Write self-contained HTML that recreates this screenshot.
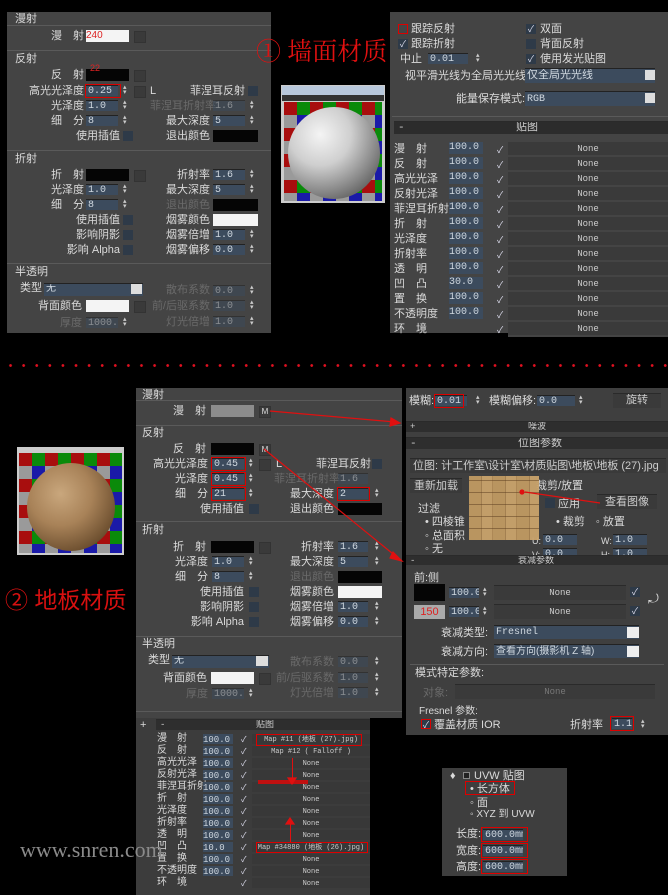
<!DOCTYPE html><html><head><meta charset="utf-8"><style>
*{margin:0;padding:0;box-sizing:border-box}
body{width:668px;height:895px;background:#000;position:relative;overflow:hidden;font-family:"Liberation Sans","Noto Sans CJK SC",sans-serif}
.p{position:absolute;background:#444}
.t{position:absolute;color:#dadada;font-size:11px;line-height:12px;white-space:nowrap}
.r{text-align:right}
.g{color:#6a6a6a}
.f{position:absolute;background:#3c4b5d;color:#d0d8e0;font-size:10px;height:11px;line-height:11px;padding-left:2px;font-family:"Liberation Mono",monospace;border-top:1px solid #222;white-space:nowrap;overflow:hidden}
.s{position:absolute;width:5px;height:10px;color:#ccc;font-size:7px;line-height:5px}
.s:before{content:"▴";display:block}.s:after{content:"▾";display:block}
.b{position:absolute;background:#3a3a3a;height:12px;color:#ccc;font-size:9px;line-height:12px;text-align:center;font-family:"Liberation Mono",monospace;border-top:1px solid #2a2a2a;white-space:nowrap;overflow:hidden}
.c{position:absolute;width:10px;height:10px;background:#2e3a48;color:#dde;font-size:9px;line-height:10px;text-align:center}
.e{position:absolute;width:10px;height:10px;background:#2e3a48}
.q{position:absolute;width:12px;height:12px;background:#3a3a3a;border:1px solid #333}
.h{position:absolute;height:1px;background:#5a5a5a}
.rb{position:absolute;border:1px solid #d00}
.sw{position:absolute;height:12px}
.chk{position:absolute;background:conic-gradient(#0a8a0a 0 25%,#1a1aa8 0 50%,#9a9a9a 0 75%,#a80e0e 0) 0 0/26px 26px}
</style></head><body>

<!-- Panel A -->
<div class="p" style="left:7px;top:12px;width:264px;height:321px"></div>
<div class="t" style="left:15px;top:13px">漫射</div><div class="h" style="left:7px;top:25px;width:264px"></div>
<div class="t r" style="left:30px;top:30px;width:54px">漫　射</div>
<div class="sw" style="left:86px;top:30px;width:43px;background:#f4f4f4;color:#d22;font-size:10px;line-height:11px">240</div><div class="q" style="left:134px;top:31px"></div>
<div class="h" style="left:7px;top:50px;width:264px"></div>
<div class="t" style="left:15px;top:53px">反射</div>
<div class="t r" style="left:30px;top:69px;width:54px">反　射</div>
<div class="sw" style="left:86px;top:69px;width:43px;background:#050505"></div><div class="t" style="left:90px;top:62px;color:#d22;font-size:9px">22</div><div class="q" style="left:134px;top:70px"></div>
<div class="t r" style="left:10px;top:85px;width:74px">高光光泽度</div><div class="f" style="left:86px;top:85px;width:32px">0.25</div><div class="rb" style="left:85px;top:84px;width:36px;height:14px"></div><div class="s" style="left:123px;top:85px"></div><div class="q" style="left:134px;top:86px"></div><div class="t" style="left:150px;top:85px">L</div>
<div class="t" style="left:190px;top:85px">菲涅耳反射</div><div class="e" style="left:248px;top:86px"></div>
<div class="t r" style="left:10px;top:100px;width:74px">光泽度</div><div class="f" style="left:86px;top:100px;width:32px">1.0</div><div class="s" style="left:123px;top:100px"></div>
<div class="t g" style="left:150px;top:100px">菲涅耳折射率</div><div class="f" style="left:213px;top:100px;width:32px;opacity:.5">1.6</div><div class="s" style="left:250px;top:100px"></div>
<div class="t r" style="left:10px;top:115px;width:74px">细　分</div><div class="f" style="left:86px;top:115px;width:32px">8</div><div class="s" style="left:123px;top:115px"></div>
<div class="t r" style="left:150px;top:115px;width:60px">最大深度</div><div class="f" style="left:213px;top:115px;width:32px">5</div><div class="s" style="left:250px;top:115px"></div>
<div class="t r" style="left:30px;top:130px;width:90px">使用插值</div><div class="e" style="left:123px;top:131px"></div>
<div class="t r" style="left:150px;top:130px;width:60px">退出颜色</div><div class="sw" style="left:213px;top:130px;width:45px;background:#050505"></div>
<div class="h" style="left:7px;top:150px;width:264px"></div>
<div class="t" style="left:15px;top:153px">折射</div>
<div class="t r" style="left:30px;top:169px;width:54px">折　射</div><div class="sw" style="left:86px;top:169px;width:43px;background:#050505"></div><div class="q" style="left:134px;top:170px"></div>
<div class="t r" style="left:150px;top:169px;width:60px">折射率</div><div class="f" style="left:213px;top:169px;width:32px">1.6</div><div class="s" style="left:250px;top:169px"></div>
<div class="t r" style="left:10px;top:184px;width:74px">光泽度</div><div class="f" style="left:86px;top:184px;width:32px">1.0</div><div class="s" style="left:123px;top:184px"></div>
<div class="t r" style="left:150px;top:184px;width:60px">最大深度</div><div class="f" style="left:213px;top:184px;width:32px">5</div><div class="s" style="left:250px;top:184px"></div>
<div class="t r" style="left:10px;top:199px;width:74px">细　分</div><div class="f" style="left:86px;top:199px;width:32px">8</div><div class="s" style="left:123px;top:199px"></div>
<div class="t r g" style="left:150px;top:199px;width:60px">退出颜色</div><div class="sw" style="left:213px;top:199px;width:45px;background:#050505"></div>
<div class="t r" style="left:30px;top:214px;width:90px">使用插值</div><div class="e" style="left:123px;top:215px"></div>
<div class="t r" style="left:150px;top:214px;width:60px">烟雾颜色</div><div class="sw" style="left:213px;top:214px;width:45px;background:#f4f4f4"></div>
<div class="t r" style="left:30px;top:229px;width:90px">影响阴影</div><div class="e" style="left:123px;top:230px"></div>
<div class="t r" style="left:150px;top:229px;width:60px">烟雾倍增</div><div class="f" style="left:213px;top:229px;width:32px">1.0</div><div class="s" style="left:250px;top:229px"></div>
<div class="t r" style="left:30px;top:244px;width:90px">影响 Alpha</div><div class="e" style="left:123px;top:245px"></div>
<div class="t r" style="left:150px;top:244px;width:60px">烟雾偏移</div><div class="f" style="left:213px;top:244px;width:32px">0.0</div><div class="s" style="left:250px;top:244px"></div>
<div class="h" style="left:7px;top:263px;width:264px"></div>
<div class="t" style="left:15px;top:266px">半透明</div>
<div class="t" style="left:20px;top:282px">类型</div><div class="f" style="left:44px;top:283px;width:99px;height:13px">无</div><div class="sw" style="left:131px;top:284px;width:11px;height:10px;background:#ddd"></div>
<div class="t r g" style="left:150px;top:284px;width:60px">散布系数</div><div class="f" style="left:213px;top:285px;width:32px;opacity:.5">0.0</div><div class="s" style="left:250px;top:285px"></div>
<div class="t r" style="left:10px;top:300px;width:72px">背面颜色</div><div class="sw" style="left:86px;top:300px;width:43px;background:#f4f4f4"></div><div class="q" style="left:134px;top:301px"></div>
<div class="t r g" style="left:140px;top:300px;width:70px">前/后驱系数</div><div class="f" style="left:213px;top:300px;width:32px;opacity:.5">1.0</div><div class="s" style="left:250px;top:300px"></div>
<div class="t r g" style="left:30px;top:317px;width:52px">厚度</div><div class="f" style="left:86px;top:317px;width:32px;opacity:.5">1000.0</div><div class="s" style="left:123px;top:317px"></div>
<div class="t r g" style="left:150px;top:316px;width:60px">灯光倍增</div><div class="f" style="left:213px;top:316px;width:32px;opacity:.5">1.0</div><div class="s" style="left:250px;top:316px"></div>

<!-- Title 1 + preview -->
<div class="t" style="left:256px;top:38px;color:#e01010;font-size:25px;line-height:30px;font-family:'Liberation Serif','Noto Serif CJK SC',serif">① 墙面材质</div>
<div style="position:absolute;left:281px;top:85px;width:104px;height:118px;background:#ccc">
<div style="position:absolute;left:1px;top:1px;width:102px;height:9px;background:#b8c8dc"></div>
<div style="position:absolute;left:1px;top:10px;width:102px;height:6px;background:#333"></div>
<div class="chk" style="left:3px;top:17px;width:98px;height:99px"></div>
<div style="position:absolute;left:7px;top:22px;width:92px;height:92px;border-radius:50%;background:radial-gradient(circle at 35% 30%,#f4f4f4 0,#cfcfcf 35%,#888 65%,#333 100%)"></div>
</div>

<!-- Panel B -->
<div class="p" style="left:390px;top:12px;width:278px;height:321px"></div>
<div class="rb" style="left:398px;top:24px;width:10px;height:10px"></div><div class="t" style="left:411px;top:23px">跟踪反射</div>
<div class="c" style="left:398px;top:39px">✓</div><div class="t" style="left:411px;top:38px">跟踪折射</div>
<div class="t" style="left:400px;top:53px">中止</div><div class="f" style="left:428px;top:53px;width:40px">0.01</div><div class="s" style="left:476px;top:53px"></div>
<div class="c" style="left:526px;top:24px">✓</div><div class="t" style="left:540px;top:23px">双面</div>
<div class="e" style="left:526px;top:39px"></div><div class="t" style="left:540px;top:38px">背面反射</div>
<div class="c" style="left:526px;top:54px">✓</div><div class="t" style="left:540px;top:53px">使用发光贴图</div>
<div class="t" style="left:405px;top:70px">视平滑光线为全局光光线:</div><div class="f" style="left:525px;top:68px;width:130px;height:15px;line-height:15px;font-size:11px">仅全局光光线</div><div class="sw" style="left:645px;top:70px;width:10px;height:10px;background:#ddd"></div>
<div class="t" style="left:456px;top:93px">能量保存模式:</div><div class="f" style="left:525px;top:91px;width:130px;height:15px;line-height:15px">RGB</div><div class="sw" style="left:645px;top:93px;width:10px;height:10px;background:#ddd"></div>
<div class="h" style="left:392px;top:116px;width:276px"></div>
<div class="b" style="left:394px;top:121px;width:274px;height:13px;background:#2c2c2c;font-size:11px;text-align:left;padding-left:4px">-<span style="position:absolute;left:122px">贴图</span></div>
<div class="t" style="left:394px;top:142px;line-height:15px">漫　射<br>反　射<br>高光光泽<br>反射光泽<br>菲涅耳折射<br>折　射<br>光泽度<br>折射率<br>透　明<br>凹　凸<br>置　换<br>不透明度<br>环　境</div>
<div style="position:absolute;left:449px;top:142px;width:34px;font:10px/12px 'Liberation Mono',monospace;color:#d0d8e0">
<div style="background:#3c4b5d;height:12px;margin-bottom:3px">100.0</div><div style="background:#3c4b5d;height:12px;margin-bottom:3px">100.0</div><div style="background:#3c4b5d;height:12px;margin-bottom:3px">100.0</div><div style="background:#3c4b5d;height:12px;margin-bottom:3px">100.0</div><div style="background:#3c4b5d;height:12px;margin-bottom:3px">100.0</div><div style="background:#3c4b5d;height:12px;margin-bottom:3px">100.0</div><div style="background:#3c4b5d;height:12px;margin-bottom:3px">100.0</div><div style="background:#3c4b5d;height:12px;margin-bottom:3px">100.0</div><div style="background:#3c4b5d;height:12px;margin-bottom:3px">100.0</div><div style="background:#3c4b5d;height:12px;margin-bottom:3px">30.0</div><div style="background:#3c4b5d;height:12px;margin-bottom:3px">100.0</div><div style="background:#3c4b5d;height:12px;margin-bottom:3px">100.0</div></div>
<div style="position:absolute;left:497px;top:143px;width:10px;font-size:9px;line-height:15px;color:#dde">
✓<br>✓<br>✓<br>✓<br>✓<br>✓<br>✓<br>✓<br>✓<br>✓<br>✓<br>✓<br>✓</div>
<div style="position:absolute;left:508px;top:142px;width:160px;font:9px/15px 'Liberation Mono',monospace;color:#ccc;text-align:center;background:repeating-linear-gradient(#3a3a3a 0 13px,#444 13px 15px)">None<br>None<br>None<br>None<br>None<br>None<br>None<br>None<br>None<br>None<br>None<br>None<br>None</div>

<!-- dotted line -->
<div style="position:absolute;left:4px;top:364px;width:664px;height:3px;background:radial-gradient(circle,#e01020 1.2px,transparent 1.6px) 0 0/13.1px 3px"></div>

<!-- Panel C -->
<div class="p" style="left:136px;top:388px;width:266px;height:330px"></div>
<div class="t" style="left:142px;top:389px">漫射</div><div class="h" style="left:136px;top:400px;width:266px"></div>
<div class="t r" style="left:150px;top:405px;width:56px">漫　射</div><div class="sw" style="left:211px;top:405px;width:43px;background:#8c8c8c"></div><div class="q" style="left:259px;top:406px;font-size:8px;color:#ddd;line-height:10px;text-align:center">M</div>
<div class="h" style="left:136px;top:425px;width:266px"></div>
<div class="t" style="left:142px;top:427px">反射</div>
<div class="t r" style="left:150px;top:443px;width:56px">反　射</div><div class="sw" style="left:211px;top:443px;width:43px;background:#050505"></div><div class="q" style="left:259px;top:444px;font-size:8px;color:#ddd;line-height:10px;text-align:center">M</div>
<div class="t r" style="left:140px;top:458px;width:68px">高光光泽度</div><div class="f" style="left:212px;top:458px;width:32px">0.45</div><div class="rb" style="left:211px;top:457px;width:35px;height:14px"></div><div class="s" style="left:249px;top:458px"></div><div class="q" style="left:259px;top:459px"></div><div class="t" style="left:276px;top:458px">L</div>
<div class="t" style="left:316px;top:458px">菲涅耳反射</div><div class="e" style="left:372px;top:459px"></div>
<div class="t r" style="left:140px;top:473px;width:68px">光泽度</div><div class="f" style="left:212px;top:473px;width:32px">0.45</div><div class="rb" style="left:211px;top:472px;width:35px;height:14px"></div><div class="s" style="left:249px;top:473px"></div>
<div class="t g" style="left:274px;top:473px">菲涅耳折射率</div><div class="f" style="left:338px;top:473px;width:30px;opacity:.5">1.6</div>
<div class="t r" style="left:140px;top:488px;width:68px">细　分</div><div class="f" style="left:212px;top:488px;width:32px">21</div><div class="rb" style="left:211px;top:487px;width:35px;height:14px"></div><div class="s" style="left:249px;top:488px"></div>
<div class="t r" style="left:270px;top:488px;width:64px">最大深度</div><div class="f" style="left:338px;top:488px;width:30px">2</div><div class="rb" style="left:337px;top:487px;width:33px;height:14px"></div><div class="s" style="left:375px;top:488px"></div>
<div class="t r" style="left:160px;top:503px;width:84px">使用插值</div><div class="e" style="left:249px;top:504px"></div>
<div class="t r" style="left:270px;top:503px;width:64px">退出颜色</div><div class="sw" style="left:338px;top:503px;width:44px;background:#050505"></div>
<div class="h" style="left:136px;top:521px;width:266px"></div>
<div class="t" style="left:142px;top:524px">折射</div>
<div class="t r" style="left:150px;top:541px;width:56px">折　射</div><div class="sw" style="left:211px;top:541px;width:43px;background:#050505"></div><div class="q" style="left:259px;top:542px"></div>
<div class="t r" style="left:270px;top:541px;width:64px">折射率</div><div class="f" style="left:338px;top:541px;width:30px">1.6</div><div class="s" style="left:375px;top:541px"></div>
<div class="t r" style="left:140px;top:556px;width:68px">光泽度</div><div class="f" style="left:212px;top:556px;width:32px">1.0</div><div class="s" style="left:249px;top:556px"></div>
<div class="t r" style="left:270px;top:556px;width:64px">最大深度</div><div class="f" style="left:338px;top:556px;width:30px">5</div><div class="s" style="left:375px;top:556px"></div>
<div class="t r" style="left:140px;top:571px;width:68px">细　分</div><div class="f" style="left:212px;top:571px;width:32px">8</div><div class="s" style="left:249px;top:571px"></div>
<div class="t r g" style="left:270px;top:571px;width:64px">退出颜色</div><div class="sw" style="left:338px;top:571px;width:44px;background:#050505"></div>
<div class="t r" style="left:160px;top:586px;width:84px">使用插值</div><div class="e" style="left:249px;top:587px"></div>
<div class="t r" style="left:270px;top:586px;width:64px">烟雾颜色</div><div class="sw" style="left:338px;top:586px;width:44px;background:#f4f4f4"></div>
<div class="t r" style="left:160px;top:601px;width:84px">影响阴影</div><div class="e" style="left:249px;top:602px"></div>
<div class="t r" style="left:270px;top:601px;width:64px">烟雾倍增</div><div class="f" style="left:338px;top:601px;width:30px">1.0</div><div class="s" style="left:375px;top:601px"></div>
<div class="t r" style="left:160px;top:616px;width:84px">影响 Alpha</div><div class="e" style="left:249px;top:617px"></div>
<div class="t r" style="left:270px;top:616px;width:64px">烟雾偏移</div><div class="f" style="left:338px;top:616px;width:30px">0.0</div><div class="s" style="left:375px;top:616px"></div>
<div class="h" style="left:136px;top:636px;width:266px"></div>
<div class="t" style="left:142px;top:638px">半透明</div>
<div class="t" style="left:148px;top:654px">类型</div><div class="f" style="left:172px;top:655px;width:97px;height:13px">无</div><div class="sw" style="left:256px;top:656px;width:12px;height:10px;background:#ddd"></div>
<div class="t r g" style="left:270px;top:656px;width:64px">散布系数</div><div class="f" style="left:338px;top:656px;width:30px;opacity:.5">0.0</div><div class="s" style="left:375px;top:656px"></div>
<div class="t r" style="left:150px;top:672px;width:57px">背面颜色</div><div class="sw" style="left:211px;top:672px;width:43px;background:#f4f4f4"></div><div class="q" style="left:259px;top:673px"></div>
<div class="t r g" style="left:260px;top:672px;width:74px">前/后驱系数</div><div class="f" style="left:338px;top:672px;width:30px;opacity:.5">1.0</div><div class="s" style="left:375px;top:672px"></div>
<div class="t r g" style="left:170px;top:688px;width:38px">厚度</div><div class="f" style="left:212px;top:688px;width:32px;opacity:.5">1000.0</div><div class="s" style="left:249px;top:688px"></div>
<div class="t r g" style="left:270px;top:687px;width:64px">灯光倍增</div><div class="f" style="left:338px;top:687px;width:30px;opacity:.5">1.0</div><div class="s" style="left:375px;top:687px"></div>
<div class="h" style="left:136px;top:711px;width:266px"></div>

<!-- wood preview + title 2 -->
<div style="position:absolute;left:17px;top:447px;width:107px;height:108px;background:#ccc">
<div class="chk" style="left:2px;top:6px;width:103px;height:100px"></div>
<div style="position:absolute;left:10px;top:16px;width:88px;height:88px;border-radius:50%;background:radial-gradient(circle at 38% 35%,#c9a77d 0,#a88258 40%,#6e5030 75%,#2e2010 100%)"></div>
</div>
<div class="t" style="left:5px;top:586px;color:#d81010;font-size:23px;line-height:28px">② 地板材质</div>

<!-- Panel D -->
<div class="p" style="left:406px;top:388px;width:262px;height:347px;background:#3f3f3f"></div>
<div class="t" style="left:409px;top:395px">模糊:</div><div class="f" style="left:435px;top:395px;width:32px">0.01</div><div class="rb" style="left:434px;top:394px;width:30px;height:14px"></div><div class="s" style="left:476px;top:395px"></div>
<div class="t" style="left:489px;top:395px">模糊偏移:</div><div class="f" style="left:537px;top:395px;width:38px">0.0</div><div class="s" style="left:579px;top:395px"></div>
<div class="b" style="left:613px;top:393px;width:48px;height:15px;font-size:11px;line-height:15px">旋转</div>
<div class="b" style="left:406px;top:421px;width:262px;height:11px;line-height:11px;background:#2e2e2e;text-align:left;padding-left:4px">+<span style="position:absolute;left:122px">噪波</span></div>
<div class="b" style="left:406px;top:437px;width:262px;height:12px;background:#2e2e2e;text-align:left;padding-left:4px;font-size:11px">-<span style="position:absolute;left:112px">位图参数</span></div>
<div class="b" style="left:410px;top:458px;width:256px;height:15px;line-height:15px;text-align:left;padding-left:3px;font-size:11px;font-family:'Liberation Sans','Noto Sans CJK SC',sans-serif">位图: 计工作室\设计室\材质贴图\地板\地板 (27).jpg</div>
<div class="b" style="left:410px;top:478px;width:52px;height:15px;line-height:15px;font-size:11px;font-family:'Liberation Sans','Noto Sans CJK SC',sans-serif">重新加载</div>
<div class="t" style="left:536px;top:480px">裁剪/放置</div>
<div class="b" style="left:597px;top:494px;width:60px;height:15px;line-height:15px;font-size:11px;font-family:'Liberation Sans','Noto Sans CJK SC',sans-serif">查看图像</div>
<div class="e" style="left:545px;top:498px"></div><div class="t" style="left:558px;top:498px">应用</div>
<div class="t" style="left:418px;top:503px">过滤</div>
<div class="t" style="left:425px;top:516px">• 四棱锥</div><div class="t" style="left:425px;top:530px">◦ 总面积</div><div class="t" style="left:425px;top:543px">◦ 无</div>
<div class="t" style="left:556px;top:516px">• 裁剪　◦ 放置</div>
<div class="t" style="left:532px;top:535px;font-size:9px">U:</div><div class="f" style="left:543px;top:534px;width:34px">0.0</div><div class="t" style="left:601px;top:535px;font-size:9px">W:</div><div class="f" style="left:613px;top:534px;width:34px">1.0</div>
<div class="t" style="left:532px;top:549px;font-size:9px">V:</div><div class="f" style="left:543px;top:548px;width:34px">0.0</div><div class="t" style="left:601px;top:549px;font-size:9px">H:</div><div class="f" style="left:613px;top:548px;width:34px">1.0</div>
<div style="position:absolute;left:469px;top:476px;width:70px;height:64px;background:repeating-linear-gradient(90deg,#c09a62 0 12px,#a98452 12px 13px,#caa46c 13px 23px,#b38c58 23px 24px),#b8915a;opacity:.95"></div>
<div style="position:absolute;left:469px;top:476px;width:70px;height:64px;background:repeating-linear-gradient(0deg,transparent 0 11px,rgba(90,60,30,.5) 11px 12px)"></div>
<div class="b" style="left:406px;top:555px;width:262px;height:10px;line-height:10px;background:#2e2e2e;text-align:left;padding-left:4px">-<span style="position:absolute;left:112px">衰减参数</span></div>
<div class="t" style="left:414px;top:572px">前:侧</div>
<div class="sw" style="left:414px;top:584px;width:31px;height:17px;background:#050505"></div>
<div class="f" style="left:449px;top:587px;width:30px">100.0</div><div class="s" style="left:483px;top:587px"></div>
<div class="b" style="left:494px;top:585px;width:132px;height:15px;line-height:15px">None</div><div class="c" style="left:630px;top:587px">✓</div>
<div class="t" style="left:648px;top:593px;font-size:13px">⤾</div>
<div class="sw" style="left:414px;top:605px;width:31px;height:14px;background:#aaa;color:#d22;font-size:11px;line-height:14px;text-align:center">150</div>
<div class="f" style="left:449px;top:606px;width:30px">100.0</div><div class="s" style="left:483px;top:606px"></div>
<div class="b" style="left:494px;top:604px;width:132px;height:15px;line-height:15px">None</div><div class="c" style="left:630px;top:606px">✓</div>
<div class="t" style="left:441px;top:627px">衰减类型:</div><div class="f" style="left:494px;top:625px;width:145px;height:14px;line-height:14px">Fresnel</div><div class="sw" style="left:627px;top:627px;width:12px;height:11px;background:#eee"></div>
<div class="t" style="left:441px;top:646px">衰减方向:</div><div class="f" style="left:494px;top:644px;width:145px;height:14px;line-height:14px;font-family:'Liberation Sans','Noto Sans CJK SC',sans-serif">查看方向(摄影机 Z 轴)</div><div class="sw" style="left:627px;top:646px;width:12px;height:11px;background:#eee"></div>
<div class="h" style="left:410px;top:664px;width:254px"></div>
<div class="t" style="left:415px;top:667px">模式特定参数:</div>
<div class="t g" style="left:423px;top:687px">对象:</div><div class="b" style="left:455px;top:684px;width:200px;height:15px;line-height:15px;color:#777">None</div>
<div class="t" style="left:419px;top:706px;font-size:10px">Fresnel 参数:</div>
<div class="c" style="left:421px;top:719px;border:1px solid #d00">✓</div><div class="t" style="left:434px;top:719px">覆盖材质 IOR</div>
<div class="t" style="left:570px;top:719px">折射率</div><div class="f" style="left:612px;top:718px;width:20px">1.1</div><div class="rb" style="left:610px;top:716px;width:24px;height:15px"></div><div class="s" style="left:641px;top:719px"></div>

<!-- Panel E -->
<div class="p" style="left:136px;top:718px;width:234px;height:177px;background:#3c3c3c"></div>
<div class="t" style="left:140px;top:719px">+</div>
<div class="b" style="left:156px;top:719px;width:214px;height:11px;line-height:11px;background:#2e2e2e;text-align:left;padding-left:4px">-<span style="position:absolute;left:100px">贴图</span></div>
<div class="t" style="left:157px;top:733px;line-height:12px;font-size:10px">漫　射<br>反　射<br>高光光泽<br>反射光泽<br>菲涅耳折射<br>折　射<br>光泽度<br>折射率<br>透　明<br>凹　凸<br>置　换<br>不透明度<br>环　境</div>
<div style="position:absolute;left:203px;top:734px;width:30px;font:9px/12px 'Liberation Mono',monospace;color:#d0d8e0;background:repeating-linear-gradient(#3c4b5d 0 10px,transparent 10px 12px);height:144px">100.0<br>100.0<br>100.0<br>100.0<br>100.0<br>100.0<br>100.0<br>100.0<br>100.0<br>10.0<br>100.0<br>100.0</div>
<div style="position:absolute;left:241px;top:734px;width:8px;font-size:8px;line-height:12px;color:#dde">✓<br>✓<br>✓<br>✓<br>✓<br>✓<br>✓<br>✓<br>✓<br>✓<br>✓<br>✓<br>✓</div>
<div style="position:absolute;left:252px;top:734px;width:118px;height:156px;font:7px/12px 'Liberation Mono','Noto Sans CJK SC',monospace;white-space:nowrap;overflow:hidden;color:#ccc;text-align:center;background:repeating-linear-gradient(#383838 0 10px,#3c3c3c 10px 12px)">Map #11 (地板 (27).jpg)<br>Map #12 ( Falloff )<br>None<br>None<br>None<br>None<br>None<br>None<br>None<br>Map #34880 (地板 (26).jpg)<br>None<br>None<br>None</div>
<div class="rb" style="left:256px;top:734px;width:106px;height:12px"></div>
<div class="rb" style="left:256px;top:842px;width:112px;height:11px"></div>
<div style="position:absolute;left:292px;top:758px;width:1px;height:20px;background:#e01010"></div>
<div style="position:absolute;left:290px;top:820px;width:1px;height:22px;background:#e01010"></div>
<div style="position:absolute;left:258px;top:780px;width:50px;height:4px;background:#c01010"></div>

<!-- watermark -->
<div class="t" style="left:20px;top:838px;font-size:22px;line-height:24px;color:#8a8a8a;font-family:'Liberation Serif',serif">www.snren.com</div>

<!-- Panel F -->
<div class="p" style="left:442px;top:768px;width:125px;height:108px;background:#3e3e3e"></div>
<div class="t" style="left:450px;top:770px">♦</div><div class="sw" style="left:463px;top:772px;width:7px;height:7px;background:#222;border:1px solid #888"></div><div class="t" style="left:474px;top:770px">UVW 贴图</div>
<div class="rb" style="left:465px;top:781px;width:50px;height:14px"></div><div class="t" style="left:470px;top:783px">• 长方体</div>
<div class="t" style="left:470px;top:797px">◦ 面</div><div class="t" style="left:470px;top:809px;font-size:10px">◦ XYZ 到 UVW</div>
<div class="t" style="left:456px;top:828px">长度:</div><div class="f" style="left:483px;top:829px;width:40px">600.0mm</div><div class="rb" style="left:481px;top:827px;width:47px;height:15px"></div>
<div class="t" style="left:456px;top:845px">宽度:</div><div class="f" style="left:483px;top:845px;width:40px">600.0mm</div><div class="rb" style="left:481px;top:843px;width:47px;height:15px"></div>
<div class="t" style="left:456px;top:861px">高度:</div><div class="f" style="left:483px;top:861px;width:40px">600.0mm</div><div class="rb" style="left:481px;top:859px;width:47px;height:15px"></div>

<!-- arrows -->
<svg style="position:absolute;left:0;top:0" width="668" height="895"><g stroke="#e01010" stroke-width="1.2" fill="#e01010">
<line x1="270" y1="411" x2="395" y2="422"/><polygon points="400,423 391,418 390,426"/>
<line x1="264" y1="449" x2="398" y2="558"/><polygon points="402,561 393,552 390,558"/>
<line x1="600" y1="503" x2="525" y2="492"/><circle cx="522" cy="492" r="2"/>
<polygon points="288,778 296,778 292,784"/><polygon points="286,824 294,824 290,818"/>
</g></svg>
</body></html>
